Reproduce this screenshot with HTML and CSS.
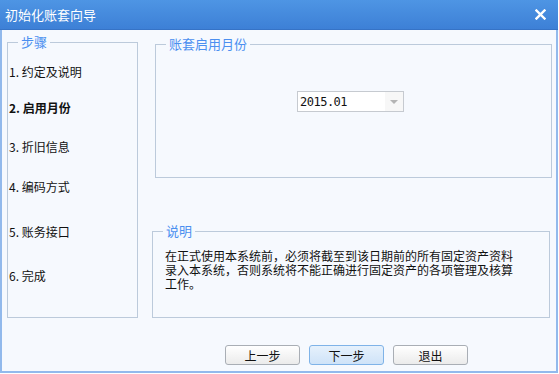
FILE: index.html
```html
<!DOCTYPE html>
<html lang="zh-CN">
<head>
    <meta charset="UTF-8">
    <title>初始化账套向导</title>
    <link rel="stylesheet" href="styles.css">
</head>
<body>
<div class="window">
    <div class="titlebar">
        <span class="title">初始化账套向导</span>
        <a class="close" href="#">
            <svg width="11" height="11" viewBox="0 0 11 11"><path d="M1.5 1.5 L9.5 9.5 M9.5 1.5 L1.5 9.5" stroke="#fff" stroke-width="2.4" stroke-linecap="square"/></svg>
        </a>
    </div>
    <div class="content">
        <div class="main">
            <fieldset class="steps">
                <legend>步骤</legend>
                <ol>
                    <li>1. 约定及说明</li>
                    <li class="current">2. 启用月份</li>
                    <li>3. 折旧信息</li>
                    <li>4. 编码方式</li>
                    <li>5. 账务接口</li>
                    <li>6. 完成</li>
                </ol>
            </fieldset>
            <div class="side">
                <fieldset class="month">
                    <legend>账套启用月份</legend>
                    <div class="select">
                        <span class="value">2015.01</span>
                        <span class="arrow"></span>
                    </div>
                </fieldset>
                <fieldset class="note">
                    <legend>说明</legend>
                    <p>在正式使用本系统前，必须将截至到该日期前的所有固定资产资料录入本系统，否则系统将不能正确进行固定资产的各项管理及核算工作。</p>
                </fieldset>
            </div>
        </div>
        <div class="buttons">
            <button>上一步</button>
            <button class="primary">下一步</button>
            <button>退出</button>
        </div>
    </div>
</div>
</body>
</html>
```

FILE: styles.css
```css
* {
    margin: 0;
    padding: 0;
    box-sizing: border-box;
}

body {
    background: #fff;
    font-family: "Noto Sans CJK SC", "Liberation Sans", sans-serif;
    font-size: 12px;
    color: #111;
}

.window {
    width: 558px;
    height: 373px;
    border: 2px solid #92b9ec;
    border-top: none;
    background: #f6f9fe;
    display: flex;
    flex-direction: column;
}

.titlebar {
    height: 30px;
    margin: 0 -2px;
    padding: 0 12px 0 5px;
    background: linear-gradient(to bottom, #4e95e4, #3d80d6);
    border-bottom: 1px solid #3673c6;
    display: flex;
    align-items: center;
    justify-content: space-between;
}

.title {
    color: #fff;
    font-size: 13px;
}

.close {
    display: flex;
}

.content {
    flex: 1;
    padding: 4px 3px 0 5px;
}

.main {
    display: flex;
    gap: 14px;
}

fieldset {
    border: 1px solid #bccadb;
}

legend {
    margin-left: 10px;
    padding: 0 3px;
    line-height: 16px;
    font-size: 13px;
    color: #4b8ff0;
}

/* 左侧步骤 */
.steps {
    width: 131px;
    height: 284px;
}

.steps ol {
    list-style: none;
    padding: 14px 0 0 1px;
    display: grid;
    grid-template-rows: 36px 39px 40px 45px 44px auto;
}

.steps li {
    line-height: 16px;
}

.steps li.current {
    font-weight: bold;
}

.side {
    flex: 1;
    padding-top: 2px;
    display: flex;
    flex-direction: column;
    gap: 45px;
}

.month {
    height: 142px;
    margin-left: 3px;
    margin-right: 1px;
}

.select {
    width: 107px;
    height: 21px;
    margin: 39px 0 0 141px;
    border: 1px solid #c6cad0;
    background: #fff;
    display: flex;
    align-items: center;
    justify-content: space-between;
    padding-left: 2px;
}

.select .value {
    font-family: "DejaVu Sans Mono", "Liberation Mono", monospace;
    font-size: 12px;
    letter-spacing: -0.5px;
}

.select .arrow {
    width: 18px;
    height: 19px;
    background: #f7f7f7;
    position: relative;
}

.select .arrow::after {
    content: "";
    position: absolute;
    left: 5px;
    top: 8px;
    border-left: 4px solid transparent;
    border-right: 4px solid transparent;
    border-top: 4px solid #b4b4b4;
}

.note {
    height: 95px;
    margin-right: 3px;
}

.note p {
    width: 352px;
    margin: 10px 0 0 12px;
    line-height: 14px;
}

.buttons {
    display: flex;
    gap: 9px;
    padding: 27px 0 0 218px;
}

button {
    width: 75px;
    height: 20px;
    font-family: inherit;
    font-size: 12px;
    color: #111;
    border: 1px solid #a9aeb5;
    border-radius: 3px;
    background: linear-gradient(to bottom, #ffffff, #ebebeb);
}

button.primary {
    border-color: #7fb3e8;
    background: linear-gradient(to bottom, #e6f1fc, #cfe3f8);
}
```
